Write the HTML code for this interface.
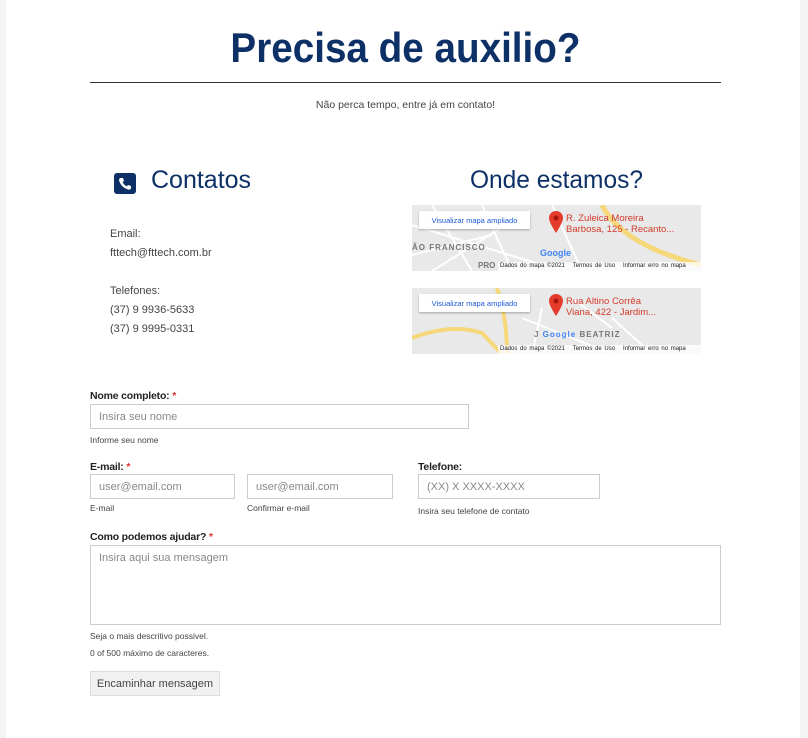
<!DOCTYPE html>
<html><head><meta charset="utf-8"><style>
*{margin:0;padding:0;box-sizing:border-box}
body{width:808px;height:738px;background:#f4f4f4;font-family:"Liberation Sans",sans-serif;position:relative;overflow:hidden}
.page{position:absolute;left:6px;top:0;width:794px;height:738px;background:#fff}
.a{position:absolute;white-space:nowrap}
.navy{color:#0d3166}
.t{font-size:11px;color:#444}
.s{font-size:8.5px;color:#444}
.lbl{font-size:10.5px;font-weight:bold;color:#222;letter-spacing:-0.2px}
.lbl b{color:#d33}
.in{position:absolute;border:1px solid #ccc;background:#fff;font-size:11px;color:#888;padding-left:8px;display:flex;align-items:center}
.map{position:absolute;left:412px;width:289px;height:66px;background:#e9e9e9;overflow:hidden}
.vb{position:absolute;left:7px;top:6px;width:111px;height:18px;background:#fff;box-shadow:0 1px 2px rgba(0,0,0,.3);font-size:7.5px;color:#1a5ad8;display:flex;align-items:center;justify-content:center}
.addr{position:absolute;left:154px;top:8px;font-size:9.5px;color:#d23a2a;line-height:11px}
.foot{position:absolute;left:86px;bottom:0;width:203px;height:9px;background:rgba(255,255,255,.75);font-size:6px;color:#222;line-height:9px;padding-left:2px;word-spacing:1px}
</style></head><body><div class="page"></div>
<div class="a navy" style="left:0;width:811px;text-align:center;top:24px;font-size:42px;font-weight:bold;transform:scaleX(0.92);transform-origin:405px 0">Precisa de auxilio?</div>
<div class="a" style="left:90px;top:82px;width:631px;height:1px;background:#333"></div>
<div class="a t" style="left:0;width:811px;text-align:center;top:99px;font-size:10.5px">Não perca tempo, entre já em contato!</div>

<div class="a" style="left:114px;top:173px;width:22px;height:21px;background:#0d3166;border-radius:3px">
<svg width="22" height="21" viewBox="0 0 22 21"><path d="M6.5 5 L9 5 L10 8 L8.6 9.3 Q10 12 12.7 13.4 L14 12 L17 13 L17 15.5 Q16 17 14 16.5 Q6.5 14 5 7 Q5 5.5 6.5 5Z" fill="#fff"/></svg></div>
<div class="a navy" style="left:151px;top:166px;font-size:25px">Contatos</div>
<div class="a navy" style="left:470px;top:166px;font-size:25px;transform:scaleX(0.98);transform-origin:0 0">Onde estamos?</div>

<div class="a t" style="left:110px;top:228px">Email:</div>
<div class="a t" style="left:110px;top:247px">fttech@fttech.com.br</div>
<div class="a t" style="left:110px;top:285px">Telefones:</div>
<div class="a t" style="left:110px;top:304px">(37) 9 9936-5633</div>
<div class="a t" style="left:110px;top:323px">(37) 9 9995-0331</div>

<div class="map" style="top:205px">
<svg width="289" height="66" style="position:absolute;left:0;top:0"><path d="M190 0 Q210 40 289 60" stroke="#f6d77a" stroke-width="5" fill="none"/><g stroke="#fff" stroke-width="2"><path d="M0 20 L130 60 M20 0 L60 66 M70 0 L100 66 M110 10 L20 66 M140 0 L170 66 M0 50 L80 30"/></g></svg>
<div class="vb">Visualizar mapa ampliado</div>
<svg style="position:absolute;left:136px;top:5px" width="16" height="24"><path d="M8 23 Q1 12 1 8 A7 7 0 0 1 15 8 Q15 12 8 23Z" fill="#e53b2c"/><circle cx="8" cy="8" r="2.5" fill="#a5170d"/></svg>
<div class="addr">R. Zuleica Moreira<br>Barbosa, 125 - Recanto...</div>
<div class="a" style="left:0;top:38px;font-size:8px;font-weight:bold;color:#777;letter-spacing:1px">ÃO FRANCISCO</div>
<div class="a" style="left:128px;top:43px;font-size:9px;color:#4285f4;font-weight:bold">Google</div>
<div class="a" style="left:66px;top:56px;font-size:8px;font-weight:bold;color:#777">PRO</div>
<div class="foot">Dados do mapa ©2021 &nbsp; Termos de Uso &nbsp; Informar erro no mapa</div>
</div>
<div class="map" style="top:288px">
<svg width="289" height="66" style="position:absolute;left:0;top:0"><path d="M0 50 Q40 35 70 45 L90 66 M85 0 Q95 30 95 66" stroke="#f6d77a" stroke-width="4" fill="none"/><g stroke="#fff" stroke-width="2"><path d="M110 30 L200 66 M130 20 L120 66 M160 10 L200 40 M200 30 L240 66"/></g></svg>
<div class="vb">Visualizar mapa ampliado</div>
<svg style="position:absolute;left:136px;top:5px" width="16" height="24"><path d="M8 23 Q1 12 1 8 A7 7 0 0 1 15 8 Q15 12 8 23Z" fill="#e53b2c"/><circle cx="8" cy="8" r="2.5" fill="#a5170d"/></svg>
<div class="addr">Rua Altino Corrêa<br>Viana, 422 - Jardim...</div>
<div class="a" style="left:122px;top:42px;font-size:8px;font-weight:bold;color:#777;letter-spacing:1px">J <span style="color:#4285f4">Google</span> BEATRIZ</div>
<div class="foot">Dados do mapa ©2021 &nbsp; Termos de Uso &nbsp; Informar erro no mapa</div>
</div>

<div class="a lbl" style="left:90px;top:390px">Nome completo: <b>*</b></div>
<div class="in" style="left:90px;top:404px;width:379px;height:25px">Insira seu nome</div>
<div class="a s" style="left:90px;top:435px">Informe seu nome</div>

<div class="a lbl" style="left:90px;top:461px">E-mail: <b>*</b></div>
<div class="in" style="left:90px;top:474px;width:145px;height:25px">user@email.com</div>
<div class="a s" style="left:90px;top:503px">E-mail</div>
<div class="in" style="left:247px;top:474px;width:146px;height:25px">user@email.com</div>
<div class="a s" style="left:247px;top:503px">Confirmar e-mail</div>
<div class="a lbl" style="left:418px;top:461px">Telefone:</div>
<div class="in" style="left:418px;top:474px;width:182px;height:25px">(XX) X XXXX-XXXX</div>
<div class="a s" style="left:418px;top:506px">Insira seu telefone de contato</div>

<div class="a lbl" style="left:90px;top:531px">Como podemos ajudar? <b>*</b></div>
<div class="in" style="left:90px;top:545px;width:631px;height:80px;align-items:flex-start;padding-top:6px">Insira aqui sua mensagem</div>
<div class="a s" style="left:90px;top:631px">Seja o mais descritivo possivel.</div>
<div class="a s" style="left:90px;top:648px">0 of 500 máximo de caracteres.</div>
<div class="a" style="left:90px;top:671px;width:130px;height:25px;background:#f1f1f1;border:1px solid #ddd;font-size:11px;color:#444;display:flex;align-items:center;justify-content:center">Encaminhar mensagem</div>
</body></html>
